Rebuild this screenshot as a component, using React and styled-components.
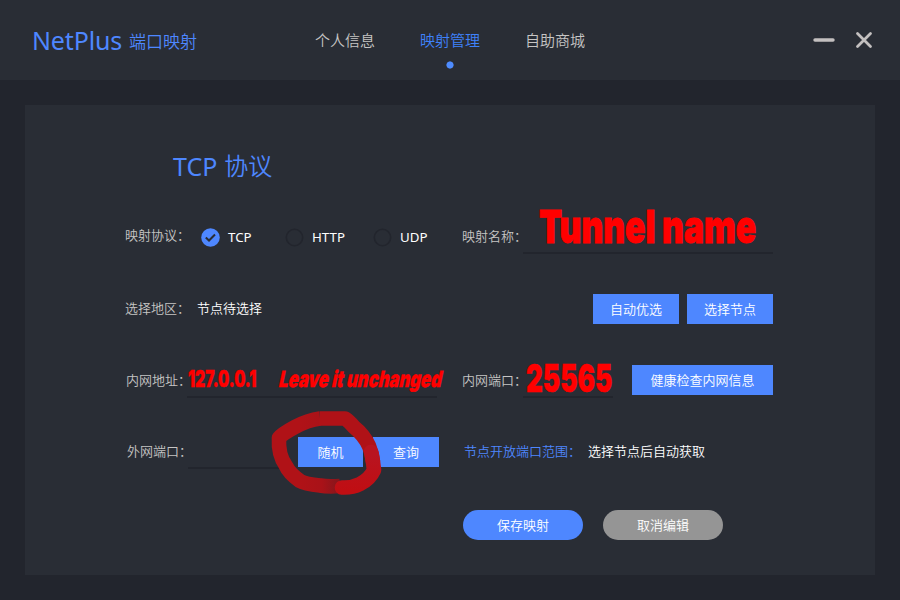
import React from "react";
import styled, { createGlobalStyle, css } from "styled-components";

const Global = createGlobalStyle`
  * { box-sizing: border-box; }
  body {
    margin: 0;
    background: #22252d;
    font-family: "Noto Sans", "Noto Sans CJK SC", sans-serif;
    font-size: 13px;
  }
`;

const Window = styled.div`
  position: relative;
  width: 900px;
  height: 600px;
  overflow: hidden;
  background: #22252d;
  color: #c0bfbf;
  white-space: nowrap;
`;

const Header = styled.header`
  display: flex;
  height: 80px;
  background: #292d35;
`;

const Brand = styled.h1`
  display: flex;
  align-items: flex-start;
  width: 315px;
  margin: 0;
  padding-left: 32px;
  font-size: 25px;
  line-height: 80px;
  font-weight: 400;
  letter-spacing: -0.15px;
  color: #4e87ff;
`;

const BrandSub = styled.span`
  margin-left: 7px;
  font-size: 17px;
  line-height: 84px;
  letter-spacing: 0;
  font-weight: 350;
`;

const Nav = styled.nav`
  display: flex;
  gap: 45px;
  flex: 1;
`;

const NavItem = styled.a`
  display: flex;
  flex-direction: column;
  align-items: center;
  width: 60px;
  font-size: 15px;
  font-weight: 350;
  line-height: 22px;
  padding-top: 29px;
  color: ${(p) => (p.$active ? "#3f82fb" : "#c6c5c4")};
`;

const Dot = styled.i`
  width: 8px;
  height: 8px;
  margin-top: 10px;
  border-radius: 50%;
  background: radial-gradient(circle, #4e8cff 3.2px, transparent 4px);
`;

const Controls = styled.div`
  display: flex;
  align-items: center;
  gap: 20px;
  padding-right: 27px;
`;

const Panel = styled.main`
  display: grid;
  grid-template-rows: 96px 72px 72px 70px 74px 51px;
  width: 850px;
  height: 470px;
  margin: 25px;
  padding: 0 102px 0 100px;
  background: #292d35;
`;

const Title = styled.h2`
  display: flex;
  gap: 7px;
  margin: 0;
  padding: 44px 0 0 48px;
  font-size: 25px;
  line-height: 34px;
  font-weight: 400;
  color: #4e87ff;
`;

const Thin = styled.span`
  font-size: 24px;
  font-weight: 350;
`;

const Row = styled.div`
  display: grid;
  grid-template-columns: 337px 311px;
  align-items: center;
`;

const Cell = styled.div`
  display: flex;
  align-items: center;
`;

const Label = styled.span`
  width: ${(p) => p.$w || 62}px;
  padding-left: ${(p) => p.$indent || 0}px;
  padding-bottom: ${(p) => p.$lift || 0}px;
  font-weight: 350;
  line-height: 20px;
  color: ${(p) => (p.$accent ? "#4e87ff" : "#c6c5c4")};
`;

const Value = styled.span`
  font-weight: 350;
  color: #fff;
  line-height: 20px;
  padding-bottom: 2px;
  margin-left: ${(p) => p.$gap}px;
`;

const Radio = styled.label`
  display: flex;
  align-items: center;
  gap: 8px;
  width: ${(p) => p.$w}px;
  font-size: 13.3px;
  line-height: 20px;
  color: #fff;
`;

const Field = styled.div`
  width: ${(p) => p.$w}px;
  height: ${(p) => p.$h || 34}px;
  border-bottom: 2px solid #22252d;
`;

const Button = styled.button`
  width: ${(p) => p.$w}px;
  height: 30px;
  margin: 0 0 0 ${(p) => p.$gap || 0}px;
  padding: 0 0 2px;
  border: 0;
  background: #4e87ff;
  color: #fff;
  font: inherit;
  font-weight: 350;
  ${(p) =>
    p.$round &&
    css`
      border-radius: 15px;
    `}
  ${(p) =>
    p.$muted &&
    css`
      background: #959595;
    `}
`;

const Actions = styled.div`
  display: flex;
  padding: 21px 0 0 338px;
`;

const Note = styled.span`
  position: absolute;
  left: ${(p) => p.$x}px;
  top: ${(p) => p.$y}px;
  font-family: "Inter", "Roboto", sans-serif;
  font-weight: 900;
  font-size: ${(p) => p.$size}px;
  line-height: 1;
  color: #ff0000;
  -webkit-text-stroke: ${(p) => p.$stroke || 0}px #ff0000;
  transform-origin: 0 0;
  transform: scaleX(${(p) => p.$sx}) skewX(${(p) => p.$skew || 0}deg);
`;

const Scribble = styled.svg`
  position: absolute;
  left: 265px;
  top: 400px;
`;

function RadioMark({ checked }) {
  return (
    <svg width="20" height="20" viewBox="0 0 20 20" fill="none">
      {checked ? (
        <>
          <circle cx="10.5" cy="10.500" r="9.3" fill="#4e87ff" />
          <path d="M5.8 10.500 9 13.500 15 7.500" stroke="#292d35" strokeWidth="2" />
        </>
      ) : (
        <circle cx="10.5" cy="10.500" r="8.2" stroke="#22252d" strokeWidth="1.6" />
      )}
    </svg>
  );
}

export default function App() {
  return (
    <Window>
      <Global />
      <Header>
        <Brand>
          NetPlus<BrandSub>端口映射</BrandSub>
        </Brand>
        <Nav>
          <NavItem>个人信息</NavItem>
          <NavItem $active>
            映射管理
            <Dot />
          </NavItem>
          <NavItem>自助商城</NavItem>
        </Nav>
        <Controls>
          <svg width="22" height="20" viewBox="0 0 22 20">
            <path d="M2 10H20" stroke="#c3c0c0" strokeWidth="3.4" strokeLinecap="round" />
          </svg>
          <svg width="18" height="20" viewBox="0 0 18 20">
            <path d="M2.5 3.5 15.5 16.5M15.5 3.5 2.5 16.5" stroke="#c3c0c0" strokeWidth="2.8" strokeLinecap="round" />
          </svg>
        </Controls>
      </Header>

      <Panel>
        <Title>
          TCP<Thin>协议</Thin>
        </Title>

        <Row>
          <Cell>
            <Label $w={75} $lift={4}>映射协议：</Label>
            <Radio $w={84}><RadioMark checked />TCP</Radio>
            <Radio $w={88}><RadioMark />HTTP</Radio>
            <Radio $w={80}><RadioMark />UDP</Radio>
          </Cell>
          <Cell>
            <Label $w={61} $lift={3}>映射名称：</Label>
            <Field $w={250} />
          </Cell>
        </Row>

        <Row>
          <Cell>
            <Label $lift={3}>选择地区：</Label>
            <Value $gap={10}>节点待选择</Value>
          </Cell>
          <Cell>
            <Button $w={86} $gap={131}>自动优选</Button>
            <Button $w={86} $gap={8}>选择节点</Button>
          </Cell>
        </Row>

        <Row>
          <Cell>
            <Label $indent={1} $lift={1}>内网地址：</Label>
            <Field $w={250} $h={36} />
          </Cell>
          <Cell>
            <Label $w={61} $lift={1}>内网端口：</Label>
            <Field $w={90} $h={36} />
            <Button $w={141} $gap={19}>健康检查内网信息</Button>
          </Cell>
        </Row>

        <Row>
          <Cell>
            <Label $w={63} $indent={2} $lift={3}>外网端口：</Label>
            <Field $w={100} />
            <Button $w={65} $gap={10}>随机</Button>
            <Button $w={66} $gap={10}>查询</Button>
          </Cell>
          <Cell>
            <Label $w={119} $indent={2} $accent $lift={3}>节点开放端口范围：</Label>
            <Value $gap={7}>选择节点后自动获取</Value>
          </Cell>
        </Row>

        <Actions>
          <Button $w={120} $round>保存映射</Button>
          <Button $w={120} $gap={20} $round $muted>取消编辑</Button>
        </Actions>
      </Panel>

      <Note $x={539} $y={204} $size={45} $sx={0.747} $stroke={1}>Tunnel name</Note>
      <Note $x={188} $y={368} $size={22.5} $sx={0.7} $stroke={0.4}>127.0.0.1</Note>
      <Note $x={282} $y={368} $size={22.5} $sx={0.74} $stroke={0.4} $skew={-16}>Leave it unchanged</Note>
      <Note $x={526} $y={358.5} $size={38} $sx={0.685} $stroke={0.5}>25565</Note>

      <Scribble width="125" height="100" viewBox="265 400 125 100" fill="none">
        <defs>
          <linearGradient id="ink" gradientUnits="userSpaceOnUse" x1="300" y1="0" x2="340" y2="0">
            <stop offset="0" stopColor="#b01217" />
            <stop offset="0.55" stopColor="#a91218" />
            <stop offset="1" stopColor="#84161c" />
          </linearGradient>
          <linearGradient id="inkEnd" gradientUnits="userSpaceOnUse" x1="0" y1="455" x2="0" y2="490">
            <stop offset="0" stopColor="#b81420" />
            <stop offset="1" stopColor="#c00e13" />
          </linearGradient>
        </defs>
        <path
          d="M340 486Q328 487 320 485.500Q305 484 300 481Q289 473 286 466Q278 455 279 438Q282 434 295 427Q308 420 320 418.500"
          stroke="url(#ink)" strokeWidth="14.6" strokeLinejoin="round"
        />
        <path
          d="M319.500 418.500H345Q349 421 354 427Q364 435 369 446Q372 453 373 462"
          stroke="#b01217" strokeWidth="14.6" strokeLinejoin="round"
        />
        <path
          d="M371 452Q372 455 373 462L374 470Q370 479 360 484Q352 488 342 487.500"
          stroke="url(#inkEnd)" strokeWidth="14.6" strokeLinecap="round" strokeLinejoin="round"
        />
      </Scribble>
    </Window>
  );
}
